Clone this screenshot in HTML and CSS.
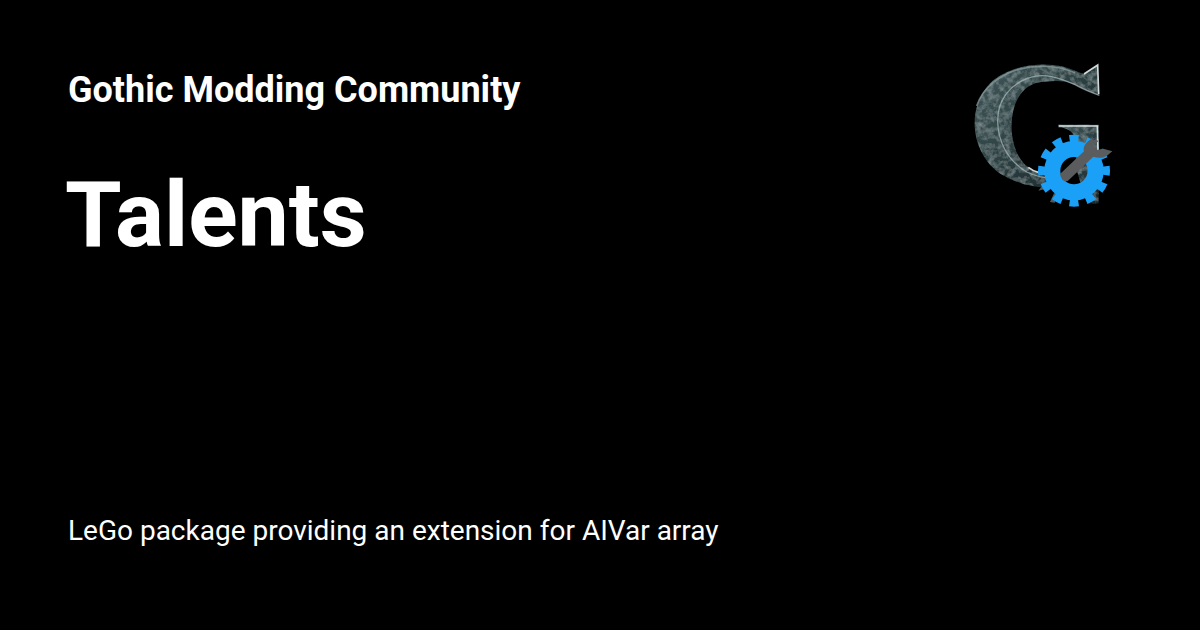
FILE: index.html
```html
<!DOCTYPE html>
<html lang="en">
<head>
<meta charset="utf-8">
<title>Talents</title>
<link rel="stylesheet" href="styles.css">
</head>
<body>
<main class="card">
  <div class="top">
    <div class="text">
      <div class="site">Gothic Modding Community</div>
      <h1 class="title">Talents</h1>
    </div>
    <svg class="logo" viewBox="0 0 510 510" width="170" height="170">
      <defs>
        <linearGradient id="metal" x1="0" y1="0" x2="1" y2="1">
          <stop offset="0" stop-color="#435a5c"/>
          <stop offset=".5" stop-color="#2c3f41"/>
          <stop offset="1" stop-color="#18252a"/>
        </linearGradient>
        <filter id="stone" x="0" y="0" width="100%" height="100%">
          <feTurbulence type="fractalNoise" baseFrequency=".06" numOctaves="3" seed="7" result="n"/>
          <feColorMatrix in="n" type="matrix" values="0 0 0 0 .3 0 0 0 0 .38 0 0 0 0 .39 1.1 0 0 0 -.42" result="d"/>
          <feComposite in="d" in2="SourceAlpha" operator="in" result="spots"/>
          <feMerge><feMergeNode in="SourceGraphic"/><feMergeNode in="spots"/></feMerge>
        </filter>
      </defs>
      <path class="stem" d="M295 224 L416 224 L416 460 L398 462 L372 436 L350 360 L345 262 C338 245 318 232 295 232 Z"/>
      <path class="bowl" d="M413 45 L418 136 C395 128 370 118 345 104 C310 88 270 92 232 98 C190 108 158 150 155 218 C153 270 168 325 205 352 C222 366 250 374 280 376 L290 412 C235 418 170 402 122 372 C75 340 42 280 44 215 C46 155 75 100 125 74 C180 44 250 36 310 50 C335 56 355 66 372 72 Z"/>
      <path class="edge" d="M418 136 C395 128 370 118 345 104 C300 84 250 66 205 84 C150 104 112 150 113 215 C114 270 140 330 200 366 C225 378 250 384 280 386"/>
      <path class="shine" d="M50 168 C70 108 125 74 175 58 C230 44 290 46 345 68"/>
      <path class="shine thin" d="M297 228 L412 228 L414 300"/>
      <path class="shine thin" d="M372 72 L413 45 L416 132"/>
      <path class="shine thin" d="M205 352 C222 366 250 372 262 372"/>
      <path class="jaw" d="M235 422 L248 406 L268 398 L272 404 L258 416 Z M270 456 L282 430 L302 420 L306 428 L292 442 L284 458 Z"/>
      <circle class="gear-ring" cx="342" cy="362" r="65"/>
      <circle class="gear-teeth" cx="342" cy="362" r="96" pathLength="360" transform="rotate(-98 342 362)"/>
      <path class="wrench" d="M300 372 L372 304 C368 290 378 278 392 268 L416 272 L400 288 L410 300 L430 296 L457 304 L440 318 C425 326 412 324 400 320 L324 392 C314 398 304 390 300 372 Z"/>
    </svg>
  </div>
  <p class="desc">LeGo package providing an extension for AIVar array</p>
</main>
</body>
</html>
```
FILE: styles.css
```css
* { box-sizing: border-box; }
html, body { margin: 0; background: #000; }
.card {
  width: 1200px;
  height: 630px;
  background: #000;
  color: #fff;
  font-family: Roboto, sans-serif;
  display: flex;
  flex-direction: column;
  justify-content: space-between;
  padding: 69px 70px 83px 68px;
}
.top { display: flex; justify-content: space-between; }
.site { font-size: 36px; font-weight: 700; line-height: 42px; }
.title { margin: 54px 0 0 -3px; font-size: 91.5px; font-weight: 700; line-height: 100px; }
.logo { margin: -19px 0 0 0; flex: none; }
.desc { margin: 0; font-size: 28px; line-height: 32px; }
.stem { fill: url(#metal); filter: url(#stone); }
.bowl { fill: url(#metal); filter: url(#stone); }
.edge { fill: none; stroke: #a9bdbd; stroke-width: 4; opacity: .7; }
.shine { fill: none; stroke: #8ea3a3; stroke-width: 5; opacity: .7; }
.thin { stroke-width: 5; stroke: #e3ecec; opacity: .9; }
.jaw { fill: #55585a; }
.gear-ring { fill: none; stroke: #1aa0f7; stroke-width: 48; }
.gear-teeth { fill: none; stroke: #1aa0f7; stroke-width: 24; stroke-dasharray: 16 14; }
.wrench { fill: #5a5c5e; }
```
